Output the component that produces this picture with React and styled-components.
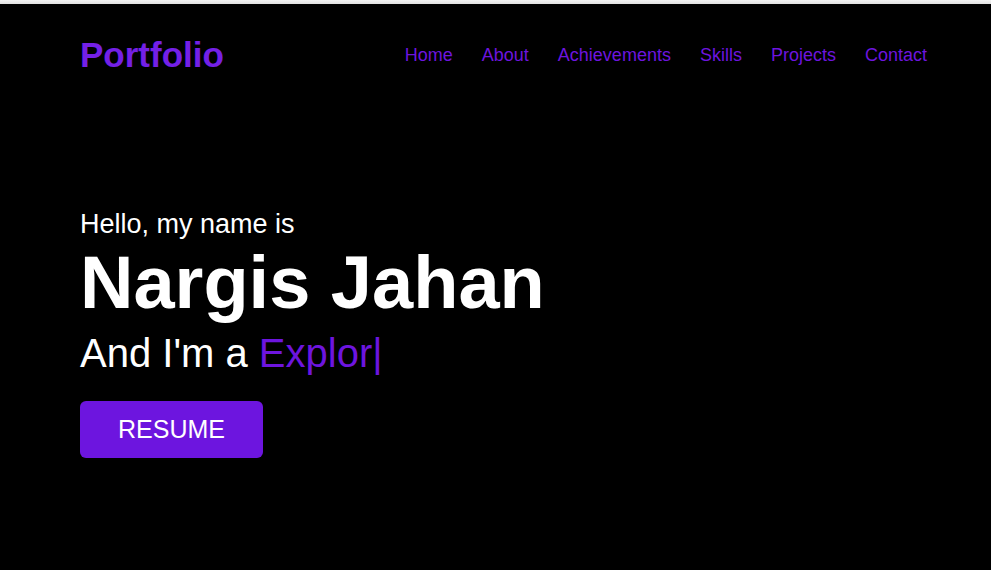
import React from "react";
import styled, { createGlobalStyle } from "styled-components";

const purple = "#6d15df";

const Global = createGlobalStyle`
  html, body {
    margin: 0;
    padding: 0;
    background: #000;
  }
  body {
    font-family: "Liberation Sans", Arial, sans-serif;
    overflow: hidden;
  }
  * { box-sizing: border-box; }
`;

const Page = styled.div`
  min-height: 570px;
  background: #000;
  display: flex;
  flex-direction: column;
`;

const TopStrip = styled.div`
  height: 4px;
  background: linear-gradient(#f4f4f4, #e2e2e2);
`;

const Header = styled.header`
  display: flex;
  align-items: center;
  justify-content: space-between;
  padding: 31px 64px 0 80px;
`;

const Logo = styled.a`
  font-size: 35px;
  font-weight: 700;
  color: #7420e6;
  text-decoration: none;
  line-height: normal;
`;

const Nav = styled.nav`
  display: flex;
  gap: 29px;
`;

const NavLink = styled.a`
  font-size: 18px;
  color: ${purple};
  text-decoration: none;
  line-height: normal;
`;

const Hero = styled.section`
  padding: 134px 80px 0 80px;
  display: flex;
  flex-direction: column;
  align-items: flex-start;
  color: #fff;
`;

const Hello = styled.div`
  font-size: 27px;
  line-height: normal;
`;

const Name = styled.h1`
  margin: 0 0 6px;
  font-size: 74px;
  font-weight: 700;
  line-height: normal;
`;

const Role = styled.div`
  font-size: 40px;
  line-height: normal;
`;

const Typed = styled.span`
  color: ${purple};
`;

const Button = styled.a`
  margin-top: 25px;
  display: inline-block;
  background: ${purple};
  color: #fff;
  font-size: 25px;
  line-height: normal;
  padding: 14px 38px;
  border-radius: 6px;
  text-decoration: none;
`;

const links = ["Home", "About", "Achievements", "Skills", "Projects", "Contact"];

export default function App() {
  return (
    <Page>
      <Global />
      <TopStrip />
      <Header>
        <Logo href="#">Portfolio</Logo>
        <Nav>
          {links.map((l) => (
            <NavLink key={l} href="#">{l}</NavLink>
          ))}
        </Nav>
      </Header>
      <Hero>
        <Hello>Hello, my name is</Hello>
        <Name>Nargis Jahan</Name>
        <Role>
          And I'm a <Typed>Explor|</Typed>
        </Role>
        <Button href="#">RESUME</Button>
      </Hero>
    </Page>
  );
}
